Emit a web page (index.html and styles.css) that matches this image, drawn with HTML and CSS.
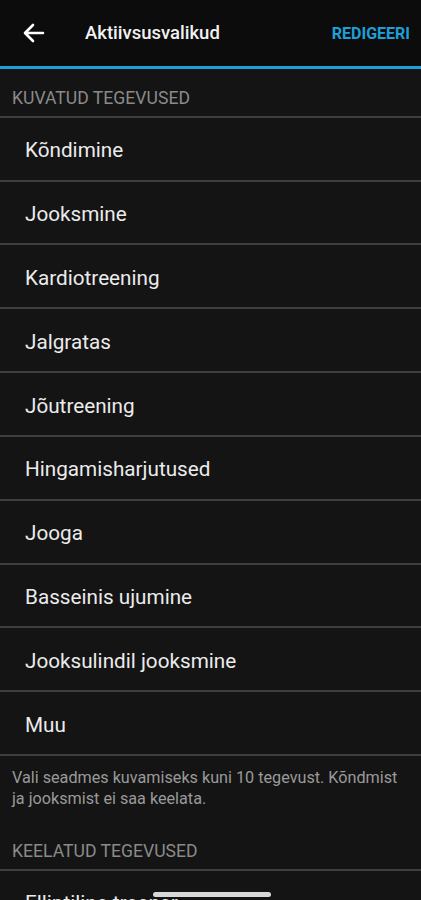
FILE: index.html
```html
<!doctype html>
<html lang="et">
 <head>
  <meta charset="UTF-8">
  <title>Aktiivsusvalikud</title>
  <link rel="stylesheet" href="styles.css">
 </head>
 <body>
  <div class="topbar">
   <svg class="back" width="22" height="20" viewBox="0 0 22 20">
    <path d="M20 10H3M10 2L2 10l8 8" fill="none" stroke="#fff" stroke-width="2.6" stroke-linecap="round" stroke-linejoin="round"/>
   </svg>
   <div class="title">Aktiivsusvalikud</div>
   <div class="edit">REDIGEERI</div>
  </div>
  <div class="content">
   <div class="label">Kuvatud tegevused</div>
   <div class="list">
    <div class="row">Kõndimine</div>
    <div class="row">Jooksmine</div>
    <div class="row">Kardiotreening</div>
    <div class="row">Jalgratas</div>
    <div class="row">Jõutreening</div>
    <div class="row">Hingamisharjutused</div>
    <div class="row">Jooga</div>
    <div class="row">Basseinis ujumine</div>
    <div class="row">Jooksulindil jooksmine</div>
    <div class="row">Muu</div>
   </div>
   <p class="note">Vali seadmes kuvamiseks kuni 10 tegevust. Kõndmist ja jooksmist ei saa keelata.</p>
   <div class="label">Keelatud tegevused</div>
   <div class="list">
    <div class="row">Elliptiline treener</div>
    <div class="row">Sõudmine</div>
   </div>
  </div>
  <div class="homebar"></div>
 </body>
</html>
```

FILE: styles.css
```css
*{
	margin:0;
	padding:0;
	box-sizing:border-box;
}

body{
	background:#141414;
	font-family:Roboto, "Noto Sans", sans-serif;
	color:#e6e6e6;
	height:900px;
	overflow:hidden;
}

.topbar{
	height:69px;
	background:#0c0c0c;
	border-bottom:3px solid #1e9fd9;
	display:flex;
	align-items:center;
	padding:0 11px 0 23px;
}

.back{
	flex:none;
}

.title{
	margin-left:40px;
	font-size:18.5px;
	font-weight:500;
	color:#f2f2f2;
	flex:1;
}

.edit{
	font-size:16px;
	font-weight:700;
	color:#1e9fd9;
}

.label{
	height:47px;
	padding:19px 0 0 12px;
	font-size:17.6px;
	color:#8a8a8a;
	text-transform:uppercase;
}

.list{
	border-bottom:2px solid #3e3e3e;
}

.row{
	height:64px;
	border-top:2px solid #3e3e3e;
	display:flex;
	align-items:center;
	padding:3px 0 0 25px;
	font-size:20.7px;
	color:#ebebeb;
	margin-top:-0.2px;
}

.note{
	padding:11px 12px 0;
	height:66px;
	font-size:16.2px;
	line-height:21px;
	color:#9a9a9a;
}

.homebar{
	position:fixed;
	left:153px;
	top:892px;
	width:118px;
	height:5px;
	border-radius:3px;
	background:#d8d8d8;
}
```
